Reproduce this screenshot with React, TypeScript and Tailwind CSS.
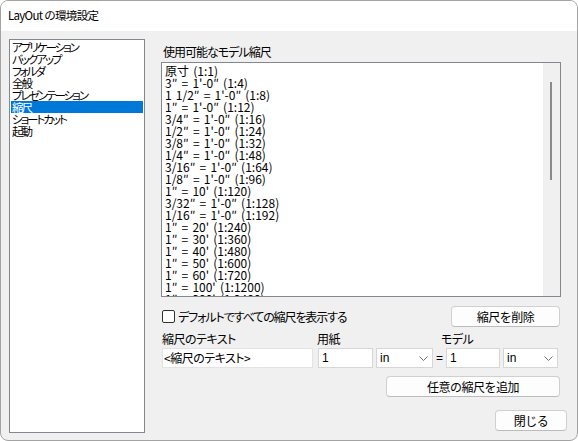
import React from 'react';

const categories = [
  'アプリケーション',
  'バックアップ',
  'フォルダ',
  '全般',
  'プレゼンテーション',
  '縮尺',
  'ショートカット',
  '起動',
];

const scales = [
  '原寸 (1:1)',
  '3″ = 1\'-0″ (1:4)',
  '1 1/2″ = 1\'-0″ (1:8)',
  '1″ = 1\'-0″ (1:12)',
  '3/4″ = 1\'-0″ (1:16)',
  '1/2″ = 1\'-0″ (1:24)',
  '3/8″ = 1\'-0″ (1:32)',
  '1/4″ = 1\'-0″ (1:48)',
  '3/16″ = 1\'-0″ (1:64)',
  '1/8″ = 1\'-0″ (1:96)',
  '1″ = 10\' (1:120)',
  '3/32″ = 1\'-0″ (1:128)',
  '1/16″ = 1\'-0″ (1:192)',
  '1″ = 20\' (1:240)',
  '1″ = 30\' (1:360)',
  '1″ = 40\' (1:480)',
  '1″ = 50\' (1:600)',
  '1″ = 60\' (1:720)',
  '1″ = 100\' (1:1200)',
  '1″ = 200\' (1:2400)',
];

const Button = ({ label, className }: { label: string; className: string }) => (
  <button
    className={
      'h-[21px] rounded-[4px] border border-[#d0d0d0] border-b-[#bcbcbc] bg-[#fdfdfd] text-[12px] leading-[16px] tracking-[-0.5px] text-black ' +
      className
    }
  >
    {label}
  </button>
);

const UnitSelect = ({ className }: { className: string }) => (
  <div
    className={
      'flex h-[20px] items-center justify-between border border-[#d6d6d6] bg-white pl-[3px] pr-[4px] text-[12px] ' +
      className
    }
  >
    <span className="font-['Liberation_Sans',sans-serif]">in</span>
    <svg width="9" height="5" viewBox="0 0 9 5" fill="none">
      <polyline points="0.5,0.5 4.5,4.5 8.5,0.5" stroke="#6e6e6e" strokeWidth="1" />
    </svg>
  </div>
);

export default function App() {
  return (
    <div className="flex h-[441px] w-[578px] flex-col overflow-hidden rounded-[8px] border border-[#a3a3a3] bg-[#f0f0f0] font-['Noto_Sans_CJK_JP',sans-serif] text-black">
      <div className="flex h-[30px] items-center bg-white pl-[7px] text-[11.5px] tracking-[-0.7px]">
        LayOut の環境設定
      </div>

      <div className="flex flex-1 gap-[16px] pb-[7px] pl-[8px] pr-[10px] pt-[8px]">
        {/* category list */}
        <div className="w-[136px] border border-[#828790] bg-white p-[1px] [font-feature-settings:'palt']">
          {categories.map((c) => (
            <div
              key={c}
              className={
                'h-[12px] pl-[1px] text-[11.5px] leading-[12px] tracking-[-2px] ' +
                (c === '縮尺' ? 'bg-[#0078d7] text-white' : '')
              }
            >
              {c}
            </div>
          ))}
        </div>

        {/* scale settings */}
        <div className="flex flex-1 flex-col">
          <div className="h-[23px] pl-[2px] pt-[5px] text-[12px] leading-[16px] tracking-[-1px] [font-feature-settings:'palt']">
            使用可能なモデル縮尺
          </div>

          <div className="flex h-[235px] w-[400px] border border-[#828790] bg-white">
            <div className="flex-1 overflow-hidden pl-[3px] pt-[2px] font-['Liberation_Sans_Narrow','Noto_Sans_CJK_JP',sans-serif] [word-spacing:1.5px]">
              {scales.map((s) => (
                <div key={s} className="h-[12px] whitespace-pre text-[12px] leading-[12px]">
                  {s}
                </div>
              ))}
            </div>
            <div className="w-[17px] bg-[#f0f0f0] pl-[7px] pt-[19px]">
              <div className="h-[98px] w-[2px] bg-[#8a8a8a]" />
            </div>
          </div>

          <div className="mt-[9px] flex h-[21px] w-[400px] items-center justify-between pr-[1px]">
            <label className="flex items-center gap-[3px] text-[12px] tracking-[-1.1px] [font-feature-settings:'palt']">
              <span className="ml-[1px] h-[13px] w-[13px] rounded-[2px] border border-[#333] bg-white" />
              デフォルトですべての縮尺を表示する
            </label>
            <Button label="縮尺を削除" className="w-[109px]" />
          </div>

          <div className="flex h-[21px] w-[400px] pt-[4px] text-[12px] leading-[16px] tracking-[-0.5px] [font-feature-settings:'palt']">
            <span className="w-[156px] pl-[1px]">縮尺のテキスト</span>
            <span className="w-[124px]">用紙</span>
            <span>モデル</span>
          </div>

          <div className="flex h-[20px] w-[400px] items-center text-[12px]">
            <div className="ml-[1px] flex h-[20px] w-[151px] items-center border border-[#e3e3e3] bg-white pl-[1px] tracking-[-0.5px] [font-feature-settings:'palt']">
              &lt;縮尺のテキスト&gt;
            </div>
            <div className="ml-[5px] flex h-[20px] w-[55px] items-center border border-[#d6d6d6] bg-white pl-[3px] font-['Liberation_Sans',sans-serif]">
              1
            </div>
            <UnitSelect className="ml-[3px] w-[57px]" />
            <span className="w-[13px] text-center font-['Liberation_Sans',sans-serif]">=</span>
            <div className="flex h-[20px] w-[54px] items-center border border-[#d6d6d6] bg-white pl-[3px] font-['Liberation_Sans',sans-serif]">
              1
            </div>
            <UnitSelect className="ml-[3px] w-[55px]" />
          </div>

          <div className="mt-[8px] flex w-[400px] justify-end pr-[1px]">
            <Button label="任意の縮尺を追加" className="w-[174px]" />
          </div>

          <div className="mt-[13px] flex justify-end">
            <Button label="閉じる" className="w-[72px]" />
          </div>
        </div>
      </div>
    </div>
  );
}
